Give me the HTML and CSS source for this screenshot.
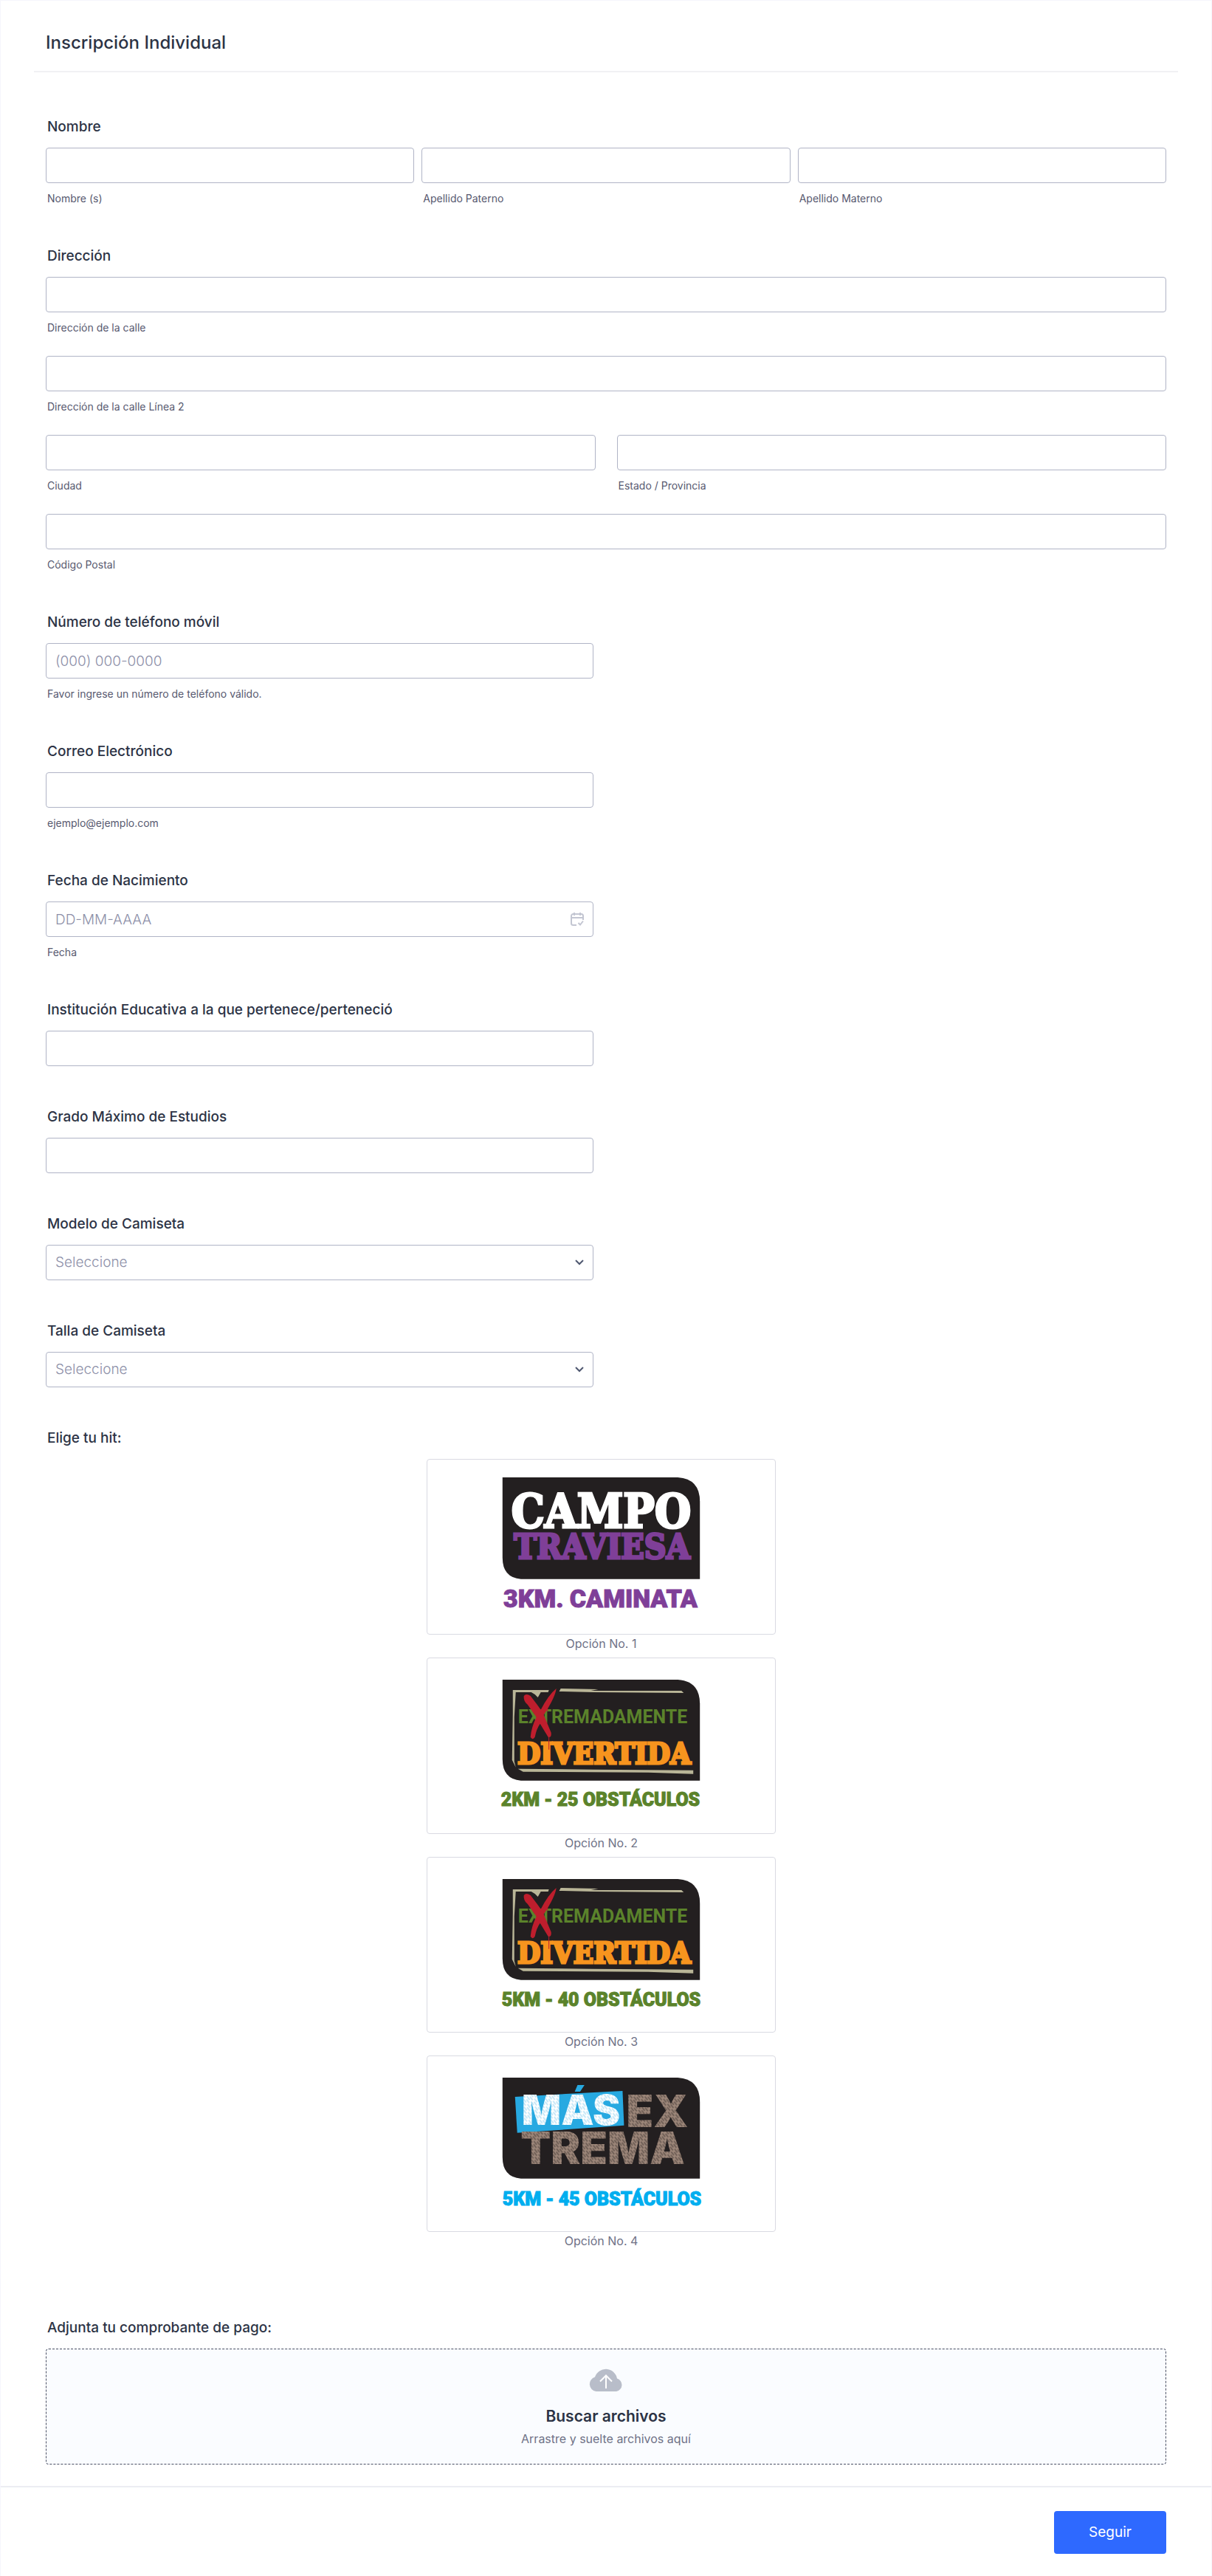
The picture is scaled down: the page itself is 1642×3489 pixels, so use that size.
FILE: index.html
```html
<!DOCTYPE html>
<html lang="es">

<head>
    <meta charset="utf-8">
    <meta name="viewport" content="width=device-width, initial-scale=1">
    <title>Inscripción Individual</title>
    <link rel="stylesheet" href="styles.css">
</head>

<body>
    <form class="form">
        <header class="form-header">
            <h1>Inscripción Individual</h1>
        </header>

        <div class="form-body">
            <fieldset class="field">
                <legend>Nombre</legend>
                <div class="row row-three">
                    <div class="cell">
                        <input type="text" id="nombre">
                        <label class="sub" for="nombre">Nombre (s)</label>
                    </div>
                    <div class="cell">
                        <input type="text" id="paterno">
                        <label class="sub" for="paterno">Apellido Paterno</label>
                    </div>
                    <div class="cell">
                        <input type="text" id="materno">
                        <label class="sub" for="materno">Apellido Materno</label>
                    </div>
                </div>
            </fieldset>

            <fieldset class="field">
                <legend>Dirección</legend>
                <div class="address">
                    <div class="cell">
                        <input type="text" id="calle">
                        <label class="sub" for="calle">Dirección de la calle</label>
                    </div>
                    <div class="cell">
                        <input type="text" id="calle2">
                        <label class="sub" for="calle2">Dirección de la calle Línea 2</label>
                    </div>
                    <div class="row row-two">
                        <div class="cell">
                            <input type="text" id="ciudad">
                            <label class="sub" for="ciudad">Ciudad</label>
                        </div>
                        <div class="cell">
                            <input type="text" id="estado">
                            <label class="sub" for="estado">Estado / Provincia</label>
                        </div>
                    </div>
                    <div class="cell">
                        <input type="text" id="postal">
                        <label class="sub" for="postal">Código Postal</label>
                    </div>
                </div>
            </fieldset>

            <div class="field half">
                <label class="title" for="telefono">Número de teléfono móvil</label>
                <input type="tel" id="telefono" placeholder="(000) 000-0000">
                <span class="sub">Favor ingrese un número de teléfono válido.</span>
            </div>

            <div class="field half">
                <label class="title" for="correo">Correo Electrónico</label>
                <input type="email" id="correo">
                <span class="sub">ejemplo@ejemplo.com</span>
            </div>

            <div class="field half">
                <label class="title" for="fecha">Fecha de Nacimiento</label>
                <div class="control">
                    <input type="text" id="fecha" placeholder="DD-MM-AAAA">
                    <svg class="calendar" viewBox="0 0 18 20" aria-hidden="true">
                        <path d="M8 18H3.500A2.500 2.500 0 0 1 1 15.500V5.500A2.500 2.500 0 0 1 3.500 3H14.500A2.500 2.500 0 0 1 17 5.500V11M1 8H17M5 1V5M13 1V5M10.500 15L13 17.500L17 12.500" />
                    </svg>
                </div>
                <span class="sub">Fecha</span>
            </div>

            <div class="field half">
                <label class="title" for="institucion">Institución Educativa a la que pertenece/perteneció</label>
                <input type="text" id="institucion">
            </div>

            <div class="field half">
                <label class="title" for="grado">Grado Máximo de Estudios</label>
                <input type="text" id="grado">
            </div>

            <div class="field half">
                <label class="title" for="modelo">Modelo de Camiseta</label>
                <div class="control">
                    <select id="modelo">
                        <option>Seleccione</option>
                    </select>
                    <svg class="chevron" viewBox="0 0 12 8" aria-hidden="true"><path d="M1 1L6 6L11 1" /></svg>
                </div>
            </div>

            <div class="field half">
                <label class="title" for="talla">Talla de Camiseta</label>
                <div class="control">
                    <select id="talla">
                        <option>Seleccione</option>
                    </select>
                    <svg class="chevron" viewBox="0 0 12 8" aria-hidden="true"><path d="M1 1L6 6L11 1" /></svg>
                </div>
            </div>

            <fieldset class="field hits">
                <legend>Elige tu hit:</legend>
                <div class="options">
                    <label class="option">
                        <input type="radio" name="hit" value="1">
                        <svg class="card" viewBox="0 0 472 237">
                            <path class="plate" d="M102 24H340Q370 26 370 57V162H127Q102 160 102 133Z" />
                            <text class="slab campo" x="236" y="92">CAMPO</text>
                            <text class="slab traviesa" x="237" y="134">TRAVIESA</text>
                            <text class="distance purple caminata" x="235" y="200">3KM. CAMINATA</text>
                        </svg>
                        <span>Opción No. 1</span>
                    </label>

                    <label class="option">
                        <input type="radio" name="hit" value="2">
                        <svg class="card" viewBox="0 0 472 237">
                            <use href="#divertida-plate" />
                            <text class="extrema" x="238" y="88">EXTREMADAMENTE</text>
                            <text class="slab divertida" x="240" y="143">DIVERTIDA</text>
                            <use href="#divertida-cross" />
                            <text class="distance green" x="235" y="200">2KM - 25 OBSTÁCULOS</text>
                        </svg>
                        <span>Opción No. 2</span>
                    </label>

                    <label class="option">
                        <input type="radio" name="hit" value="3">
                        <svg class="card" viewBox="0 0 472 237">
                            <use href="#divertida-plate" />
                            <text class="extrema" x="238" y="88">EXTREMADAMENTE</text>
                            <text class="slab divertida" x="240" y="143">DIVERTIDA</text>
                            <use href="#divertida-cross" />
                            <text class="distance green" x="236" y="201">5KM - 40 OBSTÁCULOS</text>
                        </svg>
                        <span>Opción No. 3</span>
                    </label>

                    <label class="option">
                        <input type="radio" name="hit" value="4">
                        <svg class="card" viewBox="0 0 472 237">
                            <path class="plate" d="M102 29H340Q370 31 370 62V166H127Q102 164 102 137Z" />
                            <path class="banner" d="M119 55L265 47L267 94L122 104Z" />
                            <text class="chalk mas" x="195" y="93">MÁS</text>
                            <text class="chalk" x="312" y="96">EX</text>
                            <text class="chalk trema" x="238" y="146">TREMA</text>
                            <text class="distance blue" x="237" y="202">5KM - 45 OBSTÁCULOS</text>
                        </svg>
                        <span>Opción No. 4</span>
                    </label>
                </div>
            </fieldset>

            <div class="field upload">
                <span class="title" id="comprobante">Adjunta tu comprobante de pago:</span>
                <button type="button" class="dropzone" aria-describedby="comprobante">
                    <svg class="cloud" viewBox="0 0 46 32" aria-hidden="true">
                        <path class="cloud-body" d="M9.500 31A10 10 0 0 1 8 11.500A15.500 15.500 0 0 1 38 13.500A9 9 0 0 1 37 31Z" />
                        <path class="cloud-arrow" d="M23 27V10M15 17.500L23 9.500L31 17.500" />
                    </svg>
                    <strong>Buscar archivos</strong>
                    <span>Arrastre y suelte archivos aquí</span>
                </button>
            </div>
        </div>

        <footer class="form-footer">
            <button type="button" class="next">Seguir</button>
        </footer>
    </form>

    <!-- shared logo parts -->
    <svg class="defs" aria-hidden="true">
        <defs>
            <pattern id="hatch-brown" width="6" height="9" patternUnits="userSpaceOnUse" patternTransform="rotate(-38)">
                <rect width="6" height="9" fill="#9b8578" />
                <path d="M1 0V6M4 3V9" stroke="#4a3f3a" stroke-width="1" />
            </pattern>
            <pattern id="hatch-lines" width="6" height="9" patternUnits="userSpaceOnUse" patternTransform="rotate(-38)">
                <path d="M1 0V6M4 3V9" stroke="#8fd0ef" stroke-width="1" />
            </pattern>
            <pattern id="hatch-white" width="472" height="237" patternUnits="userSpaceOnUse">
                <rect width="472" height="50" fill="#27a9e1" />
                <rect y="50" width="472" height="187" fill="#fff" />
                <rect y="50" width="472" height="187" fill="url(#hatch-lines)" />
            </pattern>
            <g id="divertida-plate">
                <path class="plate" d="M102 29H340Q370 31 370 62V166H127Q102 164 102 137Z" />
                <path class="brush" d="M116 43H165L164 46H154L150 53L146 49L141 46H120L118 80V140L120 148L115 138L116 75Z" />
                <path class="brush" d="M181 41L232 42L222 44L345 44L348 47L225 46L179 45Z" />
                <path class="brush" d="M123 150L225 151L361 152V157L300 155L130 154Z" />
            </g>
            <g id="divertida-cross">
                <path class="cross" d="M131 51Q134 47 140 51L149 63L154 70Q164 50 175 41Q174 52 158 77L168 101Q169 108 164 107L153 89Q148 96 146 107Q143 112 140 107Q141 94 148 80L136 63Q130 58 131 51Z" />
                <path class="drip" d="M165 105V124M163 62V72" />
            </g>
        </defs>
    </svg>
</body>

</html>
```

FILE: styles.css
```css
* {
    box-sizing: border-box;
}

body {
    margin: 0;
    background: #fff;
    color: #2c3345;
    font-family: Inter, "Liberation Sans", sans-serif;
}

.form {
    border: 1px solid #f6f6fc;
    border-bottom: none;
}

.form-header {
    margin: 0 45px;
    padding: 41px 16px 22px;
    border-bottom: 2px solid #f1f1f4;
}

.form-header h1 {
    margin: 0;
    font-size: 24px;
    line-height: 32px;
    font-weight: 500;
}

h1,
legend,
.title {
    color: #2c3345;
}

.form-body {
    display: flex;
    flex-direction: column;
    gap: 57px;
    padding: 62px 61px 29px;
}

.field {
    display: flex;
    flex-direction: column;
    min-width: 0;
    margin: 0;
    padding: 0;
    border: none;
}

.half {
    width: calc(50% - 17px);
}

legend,
.title {
    display: block;
    margin-bottom: 16px;
    padding: 0 2px;
    font-size: 19px;
    line-height: 24px;
    font-weight: 500;
}

.sub {
    margin-top: 12px;
    padding: 0 2px;
    color: #57596f;
    font-size: 14px;
    line-height: 18px;
}

.cell {
    display: flex;
    flex-direction: column;
}

.row {
    display: grid;
}

.row-three {
    grid-template-columns: repeat(3, 1fr);
    gap: 10px;
}

.row-two {
    grid-template-columns: repeat(2, 1fr);
    gap: 29px;
}

.address {
    display: flex;
    flex-direction: column;
    gap: 29px;
}

input,
select {
    width: 100%;
    height: 48px;
    padding: 0 12px;
    border: 1px solid #b0b4c6;
    border-radius: 4px;
    background: #fff;
    color: #2c3345;
    font: 300 19px/24px Inter, "Liberation Sans", sans-serif;
}

input::placeholder,
select {
    color: #8d8fa8;
    opacity: 1;
}

select {
    appearance: none;
}

.control {
    position: relative;
}

.calendar {
    position: absolute;
    top: 14px;
    right: 13px;
    width: 18px;
    height: 20px;
    fill: none;
    stroke: #c3c6d2;
    stroke-width: 2;
}

.chevron {
    position: absolute;
    top: 20px;
    right: 13px;
    width: 12px;
    height: 8px;
    fill: none;
    stroke: #4f5870;
    stroke-width: 2;
}

/* image choices */
.options {
    display: flex;
    flex-direction: column;
    align-items: center;
    gap: 7px;
    padding-right: 13px;
}

.option {
    position: relative;
    display: flex;
    flex-direction: column;
    align-items: center;
    width: 473px;
    max-width: 100%;
    color: #6f7287;
    font-size: 16px;
    line-height: 24px;
}

.option input {
    position: absolute;
    width: 1px;
    height: 1px;
    opacity: 0;
}

.card {
    display: block;
    width: 100%;
    border: 1px solid #d9dae2;
    border-radius: 4px;
}

.card text {
    text-anchor: middle;
}

.plate {
    fill: #231f20;
}

.slab {
    font-family: "DejaVu Serif Condensed", "DejaVu Serif", serif;
    font-weight: 700;
    stroke-width: 3;
}

.campo {
    font-size: 63px;
    fill: #fff;
    stroke: #fff;
}

.traviesa {
    font-size: 46px;
    fill: #7f3f98;
    stroke: #7f3f98;
}

.divertida {
    font-size: 40px;
    fill: #f7941e;
    stroke: #f7941e;
}

.extrema {
    font: 700 25px Roboto, sans-serif;
    fill: #5b832b;
}

.distance {
    font-family: Roboto, sans-serif;
    font-size: 25px;
    font-weight: 900;
    stroke-width: 1;
}

.caminata {
    font-size: 34px;
}

.purple {
    fill: #7f3f98;
    stroke: #7f3f98;
}

.green {
    fill: #5b832b;
    stroke: #5b832b;
}

.blue {
    fill: #00aeef;
    stroke: #00aeef;
}

.brush {
    fill: #b9b597;
}

.cross {
    fill: #be1e2d;
}

.drip {
    fill: none;
    stroke: #be1e2d;
    stroke-width: 1;
}

.banner {
    fill: #27a9e1;
}

.chalk {
    font-family: Inter, sans-serif;
    font-size: 60px;
    font-weight: 900;
    fill: url(#hatch-brown);
}

.mas {
    font-size: 56px;
    fill: url(#hatch-white);
}

.defs {
    display: block;
    width: 0;
    height: 0;
}

/* upload */
.upload {
    margin-top: 37px;
}

.dropzone {
    display: flex;
    flex-direction: column;
    align-items: center;
    width: 100%;
    padding: 26px 16px 24px;
    border: 1px dashed #4a4f63;
    border-radius: 4px;
    background: #fafcff;
    color: #6f7287;
    font: 400 16px/20px Inter, "Liberation Sans", sans-serif;
    cursor: pointer;
}

.dropzone strong {
    margin: 19px 0 6px;
    color: #2c3345;
    font-size: 21px;
    line-height: 28px;
    font-weight: 600;
}

.cloud {
    width: 46px;
    height: 32px;
}

.cloud-body {
    fill: #b8bdc9;
}

.cloud-arrow {
    fill: none;
    stroke: #fff;
    stroke-width: 2;
}

.form-footer {
    display: flex;
    justify-content: flex-end;
    padding: 32px 61px;
    border-top: 2px solid #ecedf3;
}

.next {
    min-width: 152px;
    height: 58px;
    border: none;
    border-radius: 4px;
    background: #2e69ff;
    color: #fff;
    font: 400 19px/24px Inter, "Liberation Sans", sans-serif;
    cursor: pointer;
}
```
